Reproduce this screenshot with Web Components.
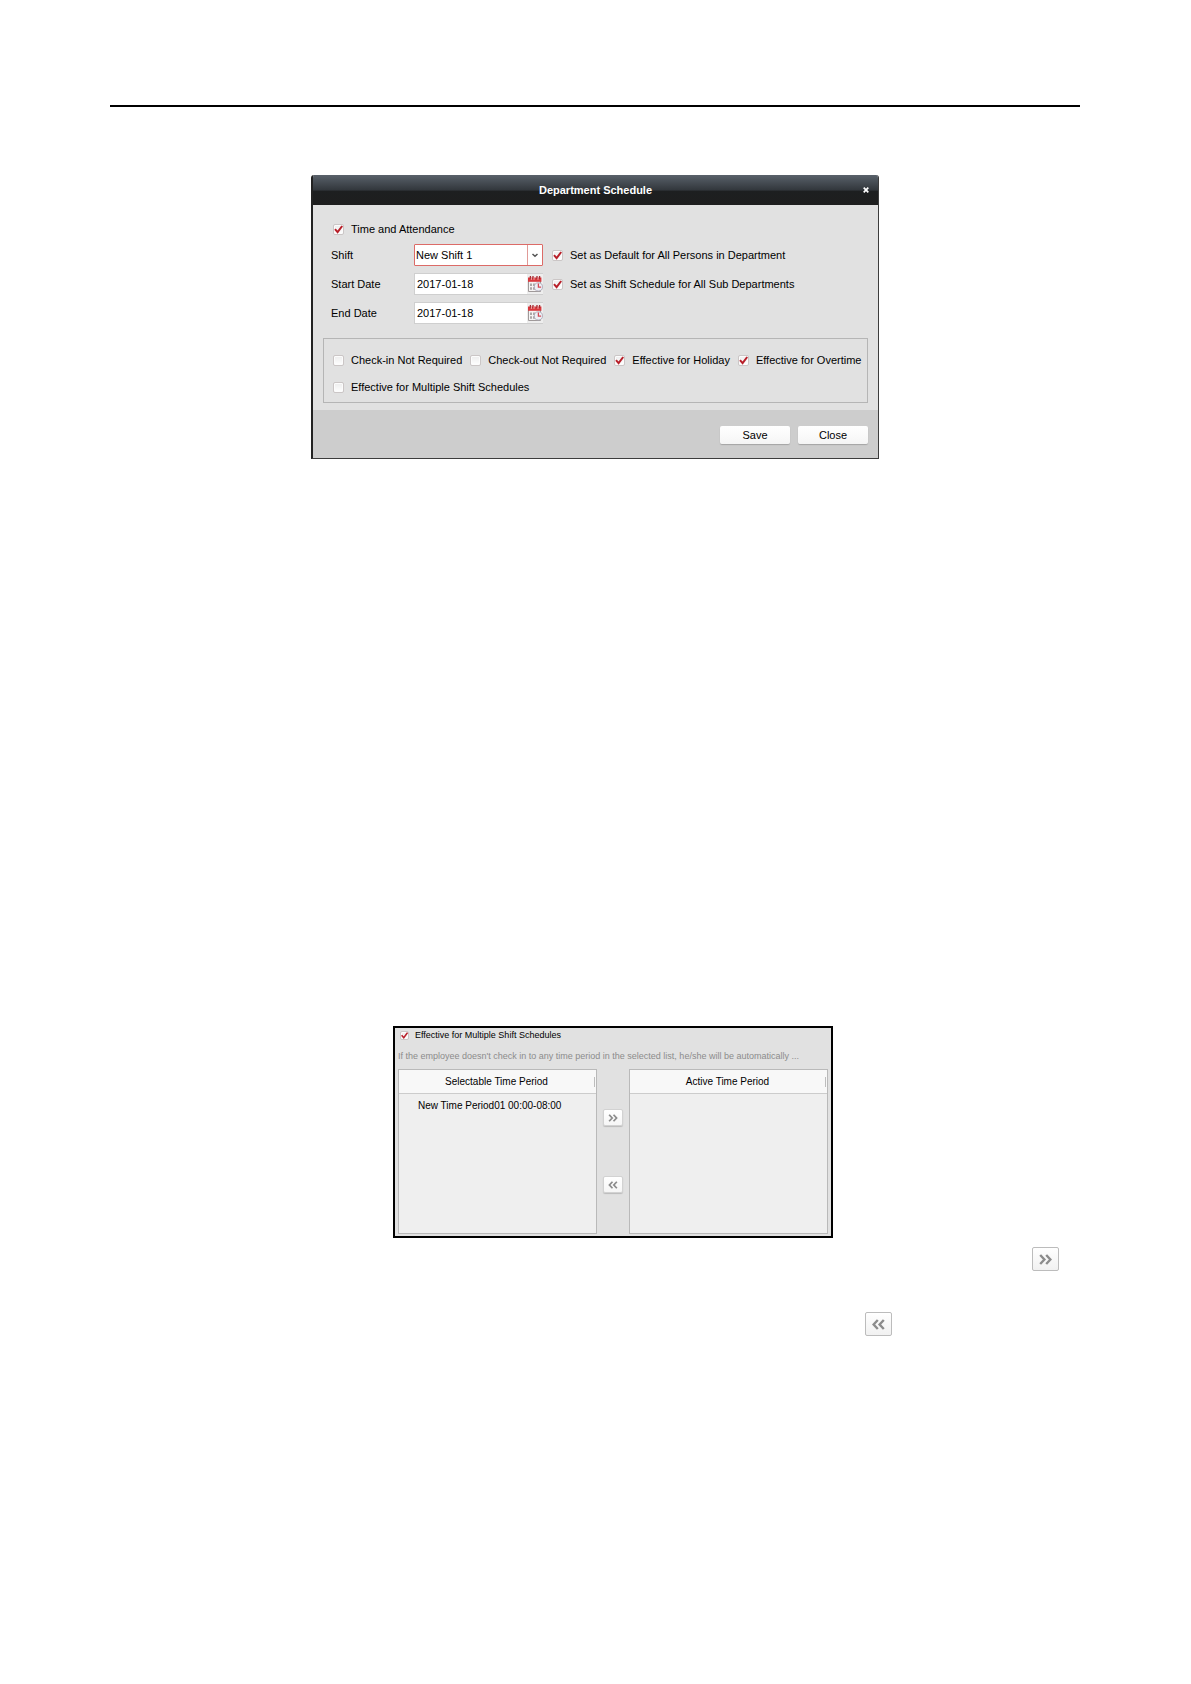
<!DOCTYPE html>
<html lang="en">
<head>
<meta charset="utf-8">
<title>Department Schedule</title>
<style>
  body {
    margin: 0;
    background: #ffffff;
    color: #000000;
    font-family: "Liberation Sans", Arial, sans-serif;
    font-size: 11px;
  }
</style>
</head>
<body>
<manual-page>
  <schedule-dialog heading="Department Schedule"></schedule-dialog>
  <period-picker slot="figure"></period-picker>
  <shift-button slot="add" direction="right" large></shift-button>
  <shift-button slot="remove" direction="left" large></shift-button>
</manual-page>

<script>
'use strict';

class ManualPage extends HTMLElement {
  constructor() {
    super();
    this.attachShadow({ mode: 'open' });
    this.shadowRoot.innerHTML = `
      <style>
        :host {
          display: block;
          padding: 105px 111px 100px 110px;
        }
        hr {
          margin: 0 0 68px;
          border: 0;
          border-top: 2px solid #000000;
        }
        .dialog {
          display: flex;
          justify-content: center;
          margin-bottom: 567px;
        }
        .figure {
          display: flex;
          justify-content: center;
          padding-left: 36px;
          margin-bottom: 9px;
        }
        .step {
          display: flex;
          justify-content: flex-end;
          padding-right: 21px;
          margin-bottom: 41px;
        }
        .step.remove {
          padding-right: 188px;
        }
      </style>
      <hr>
      <div class="dialog"><slot></slot></div>
      <div class="figure"><slot name="figure"></slot></div>
      <div class="step"><slot name="add"></slot></div>
      <div class="step remove"><slot name="remove"></slot></div>
    `;
  }
}

class CheckItem extends HTMLElement {
  constructor() {
    super();
    this.attachShadow({ mode: 'open' });
    this.shadowRoot.innerHTML = `
      <style>
        :host {
          display: block;
          padding-left: 2px;
          white-space: nowrap;
        }
        label {
          display: flex;
          align-items: center;
          gap: 7px;
          line-height: 16px;
        }
        :host([small]) {
          font-size: 9px;
        }
        :host([small]) label {
          line-height: 14px;
          gap: 6px;
        }
        .box {
          display: grid;
          width: 11px;
          height: 11px;
        }
        :host([small]) .box {
          width: 9px;
          height: 9px;
        }
        input, svg {
          grid-area: 1 / 1;
          width: 100%;
          height: 100%;
          box-sizing: border-box;
          margin: 0;
        }
        input {
          appearance: none;
          border: 1px solid #cbc6c6;
          border-radius: 2px;
          background: linear-gradient(#ededed, #ffffff);
          box-shadow: inset 0 0 0 1px #fcfcfc;
        }
        svg {
          visibility: hidden;
          pointer-events: none;
          z-index: 1;
        }
        input:checked + svg {
          visibility: visible;
        }
      </style>
      <label>
        <span class="box">
          <input type="checkbox">
          <svg viewBox="0 0 11 11" aria-hidden="true">
            <path d="M2 5.2 L4.6 8.2 L9.2 2" fill="none" stroke="#b8202a" stroke-width="2"/>
          </svg>
        </span>
        <span><slot></slot></span>
      </label>
    `;
  }
  connectedCallback() {
    this.shadowRoot.querySelector('input').checked = this.hasAttribute('checked');
  }
}

class DateField extends HTMLElement {
  constructor() {
    super();
    this.attachShadow({ mode: 'open' });
    this.shadowRoot.innerHTML = `
      <style>
        :host {
          display: block;
        }
        label {
          display: grid;
          grid-template-columns: 83px 129px;
          align-items: center;
        }
        .field {
          display: flex;
          box-sizing: border-box;
          height: 22px;
          border: 1px solid #cfcfcf;
          border-right: 0;
          background: #ffffff;
        }
        input {
          flex: 1;
          min-width: 0;
          border: 0;
          padding: 0 0 0 2px;
          background: none;
          color: inherit;
          font: inherit;
        }
        button {
          width: 16px;
          border: 0;
          padding: 0;
          background: #eeeeee;
        }
        svg {
          display: block;
          width: 16px;
          height: 18px;
        }
      </style>
      <label>
        <slot></slot>
        <span class="field">
          <input type="text">
          <button type="button" aria-label="Pick a date">
            <svg viewBox="0 0 16 18">
              <path d="M1.5 4.5h12v12h-12z" fill="#f6f4f4" stroke="#9f9999"/>
              <path d="M1 2.5h13.4v4.3H1z" fill="#d9383d"/>
              <path d="M3.4 1v3M6 1v3M10 1v3M12.6 1v3" stroke="#a82930" stroke-width="1.3"/>
              <path d="M4.4 2.5v2.4M7 2.5v2.4M11 2.5v2.4" stroke="#f7c9c9" stroke-width="0.8"/>
              <path d="M3 8.5h2v2.4H3zM6 8.5h2v2.4H6zM3 12.3h2v2.4H3zM6 12.3h2v2.4H6z" fill="#aca7a7"/>
              <circle cx="11.4" cy="11.9" r="4.1" fill="#eef0f6" stroke="#aaa8b6" stroke-width="0.9"/>
              <path d="M11.4 8.6v3.5h2.7" fill="none" stroke="#d34b55" stroke-width="1.3"/>
            </svg>
          </button>
        </span>
      </label>
    `;
  }
  connectedCallback() {
    this.shadowRoot.querySelector('input').value = this.getAttribute('value');
  }
}

class ShiftSelect extends HTMLElement {
  constructor() {
    super();
    this.attachShadow({ mode: 'open' });
    this.shadowRoot.innerHTML = `
      <style>
        :host {
          display: block;
        }
        label {
          display: grid;
          grid-template-columns: 83px 129px;
          align-items: center;
        }
        .field {
          display: grid;
          height: 22px;
        }
        select, svg {
          grid-area: 1 / 1;
        }
        select {
          appearance: none;
          box-sizing: border-box;
          width: 100%;
          margin: 0;
          border: 1px solid #dc6b67;
          border-radius: 1px;
          padding: 0 16px 0 1px;
          background: #ffffff;
          color: inherit;
          font: inherit;
        }
        svg {
          justify-self: end;
          width: 16px;
          height: 22px;
          pointer-events: none;
          z-index: 1;
        }
      </style>
      <label>
        Shift
        <span class="field">
          <select>
            <option>New Shift 1</option>
          </select>
          <svg viewBox="0 0 16 22" aria-hidden="true">
            <path d="M0.5 1v20" stroke="#e09a97"/>
            <path d="M5.5 10l2.5 2.3 2.5-2.3" fill="none" stroke="#555555" stroke-width="1.5"/>
          </svg>
        </span>
      </label>
    `;
  }
}

class ScheduleDialog extends HTMLElement {
  constructor() {
    super();
    this.attachShadow({ mode: 'open' });
    this.shadowRoot.innerHTML = `
      <style>
        :host {
          display: block;
          box-sizing: border-box;
          width: 100%;
          max-width: 568px;
          border: 1px solid #3c3c3c;
          border-top: 0;
          border-left: 2px solid #222222;
          border-radius: 3px 3px 0 0;
          background: #e1e1e1;
          overflow: hidden;
        }
        header {
          display: grid;
          grid-template-columns: 24px 1fr 24px;
          align-items: center;
          height: 30px;
          background: linear-gradient(#59616a, #32373c 50%, #1d1f20 54%, #1e1e1e);
          color: #ffffff;
        }
        h1 {
          grid-column: 2;
          margin: 0;
          font-size: 11px;
          text-align: center;
        }
        header button {
          display: grid;
          place-items: center;
          height: 24px;
          border: 0;
          padding: 0;
          background: none;
        }
        header svg {
          width: 6px;
          height: 6px;
        }
        .body {
          padding: 16px 10px 7px;
        }
        .rows {
          display: grid;
          gap: 7px;
          padding-left: 8px;
        }
        .row {
          display: flex;
          align-items: center;
          gap: 7px;
        }
        fieldset {
          display: flex;
          flex-wrap: wrap;
          gap: 11px 6px;
          min-width: 0;
          margin: 14px 0 0;
          border: 1px solid #b5b5b5;
          padding: 13px 2px 7px 7px;
        }
        footer {
          display: flex;
          justify-content: flex-end;
          gap: 8px;
          padding: 16px 10px 14px;
          background: #cdcdcd;
        }
        footer button {
          width: 70px;
          height: 18px;
          border: 0;
          border-radius: 2px;
          padding: 0;
          background: linear-gradient(#ffffff, #f5f5f5);
          box-shadow: 0 1px 1px #a5a5a5;
          color: inherit;
          font: inherit;
        }
      </style>
      <header>
        <h1></h1>
        <button type="button" aria-label="Close dialog">
          <svg viewBox="0 0 6 6"><path d="M0.7 0.7l4.6 4.6M5.3 0.7L0.7 5.3" stroke="#ffffff" stroke-width="1.7"/></svg>
        </button>
      </header>
      <div class="body">
        <div class="rows">
          <check-item checked>Time and Attendance</check-item>
          <div class="row">
            <shift-select></shift-select>
            <check-item checked>Set as Default for All Persons in Department</check-item>
          </div>
          <div class="row">
            <date-field value="2017-01-18">Start Date</date-field>
            <check-item checked>Set as Shift Schedule for All Sub Departments</check-item>
          </div>
          <div class="row">
            <date-field value="2017-01-18">End Date</date-field>
          </div>
        </div>
        <fieldset>
          <check-item>Check-in Not Required</check-item>
          <check-item>Check-out Not Required</check-item>
          <check-item checked>Effective for Holiday</check-item>
          <check-item checked>Effective for Overtime</check-item>
          <check-item>Effective for Multiple Shift Schedules</check-item>
        </fieldset>
      </div>
      <footer>
        <button type="button">Save</button>
        <button type="button">Close</button>
      </footer>
    `;
  }
  connectedCallback() {
    this.shadowRoot.querySelector('h1').textContent = this.getAttribute('heading');
  }
}

class ShiftButton extends HTMLElement {
  constructor() {
    super();
    this.attachShadow({ mode: 'open' });
    this.shadowRoot.innerHTML = `
      <style>
        :host {
          display: block;
        }
        button {
          display: grid;
          place-items: center;
          box-sizing: border-box;
          width: 20px;
          height: 17px;
          border: 1px solid #d2d2d2;
          border-radius: 2px;
          padding: 0;
          background: linear-gradient(#ffffff, #f6f6f6);
          box-shadow: 0 1px 1px #bbbbbb;
        }
        svg {
          width: 10px;
          height: 8px;
        }
        :host([large]) button {
          width: 27px;
          height: 24px;
          border-color: #bcbcbc;
          background: linear-gradient(#ffffff, #f1f1f1);
          box-shadow: none;
        }
        :host([large]) svg {
          width: 13px;
          height: 11px;
        }
        :host([direction="left"]) svg {
          transform: scaleX(-1);
        }
      </style>
      <button type="button">
        <svg viewBox="0 0 13 11" aria-hidden="true">
          <path d="M1.2 1l4.2 4.5L1.2 10M7.2 1l4.2 4.5L7.2 10" fill="none" stroke="#8c8c8c" stroke-width="2.4"/>
        </svg>
      </button>
    `;
  }
  connectedCallback() {
    let label = this.getAttribute('direction') === 'left' ? 'Remove period' : 'Add period';
    this.shadowRoot.querySelector('button').setAttribute('aria-label', label);
  }
}

class PeriodList extends HTMLElement {
  constructor() {
    super();
    this.attachShadow({ mode: 'open' });
    this.shadowRoot.innerHTML = `
      <style>
        :host {
          display: block;
          box-sizing: border-box;
          height: 165px;
          border: 1px solid #b9b9b9;
          background: #efefef;
          font-size: 10px;
        }
        table {
          width: 100%;
          border-collapse: collapse;
          font-size: inherit;
        }
        th {
          height: 23px;
          border-bottom: 1px solid #cccccc;
          padding: 0;
          background: #f8f8f8;
          font-weight: normal;
        }
        .head {
          display: flex;
          align-items: center;
          justify-content: center;
          height: 10px;
          margin-right: 1px;
          border-right: 1px solid #bdbdbd;
        }
        td {
          height: 22px;
          padding: 0 0 0 19px;
        }
      </style>
      <table>
        <thead><tr><th><div class="head"></div></th></tr></thead>
        <tbody></tbody>
      </table>
    `;
  }
  connectedCallback() {
    this.shadowRoot.querySelector('.head').textContent = this.getAttribute('heading');
    if (this.hasAttribute('period')) {
      const cell = this.shadowRoot.querySelector('tbody').insertRow().insertCell();
      cell.textContent = this.getAttribute('period');
    }
  }
}

class PeriodPicker extends HTMLElement {
  constructor() {
    super();
    this.attachShadow({ mode: 'open' });
    this.shadowRoot.innerHTML = `
      <style>
        :host {
          display: block;
          box-sizing: border-box;
          width: 100%;
          max-width: 440px;
          border: 2px solid #000000;
          padding: 0 3px 2px;
          background: #e1e1e1;
        }
        p {
          margin: 7px 0 6px;
          color: #8c8c8c;
          font-size: 9px;
          line-height: 14px;
          white-space: nowrap;
          overflow: hidden;
        }
        .lists {
          display: grid;
          grid-template-columns: 1fr 20px 1fr;
          gap: 6px;
        }
        .moves {
          display: flex;
          flex-direction: column;
          gap: 50px;
          padding-top: 40px;
        }
      </style>
      <check-item small checked>Effective for Multiple Shift Schedules</check-item>
      <p>If the employee doesn't check in to any time period in the selected list, he/she will be automatically ...</p>
      <div class="lists">
        <period-list heading="Selectable Time Period" period="New Time Period01 00:00-08:00"></period-list>
        <div class="moves">
          <shift-button direction="right"></shift-button>
          <shift-button direction="left"></shift-button>
        </div>
        <period-list heading="Active Time Period"></period-list>
      </div>
    `;
  }
}

window.customElements.define('manual-page', ManualPage);
window.customElements.define('check-item', CheckItem);
window.customElements.define('date-field', DateField);
window.customElements.define('shift-select', ShiftSelect);
window.customElements.define('schedule-dialog', ScheduleDialog);
window.customElements.define('shift-button', ShiftButton);
window.customElements.define('period-list', PeriodList);
window.customElements.define('period-picker', PeriodPicker);
</script>
</body>
</html>
